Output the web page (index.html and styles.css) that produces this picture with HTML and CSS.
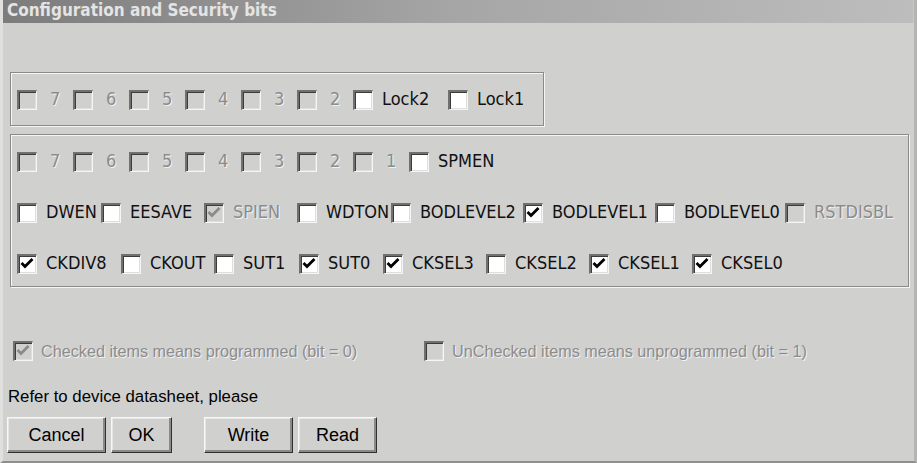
FILE: index.html
```html
<!DOCTYPE html>
<html lang="en">
<head>
  <meta charset="UTF-8">
  <title>Configuration and Security bits</title>
  <link rel="stylesheet" href="styles.css">
</head>
<body>
  <div class="window">
    <div class="titlebar">Configuration and Security bits</div>

    <div class="content">
      <!-- lock bits -->
      <div class="group lock">
        <div class="row">
          <div class="item w56 dis"><span class="cb"></span><span class="txt num">7</span></div>
          <div class="item w56 dis"><span class="cb"></span><span class="txt num">6</span></div>
          <div class="item w56 dis"><span class="cb"></span><span class="txt num">5</span></div>
          <div class="item w56 dis"><span class="cb"></span><span class="txt num">4</span></div>
          <div class="item w56 dis"><span class="cb"></span><span class="txt num">3</span></div>
          <div class="item w56 dis"><span class="cb"></span><span class="txt num">2</span></div>
          <div class="item w95"><span class="cb"></span><span class="txt">Lock2</span></div>
          <div class="item"><span class="cb"></span><span class="txt">Lock1</span></div>
        </div>
      </div>

      <!-- fuse bits -->
      <div class="group fuses">
        <div class="row">
          <div class="item w56 dis"><span class="cb"></span><span class="txt num">7</span></div>
          <div class="item w56 dis"><span class="cb"></span><span class="txt num">6</span></div>
          <div class="item w56 dis"><span class="cb"></span><span class="txt num">5</span></div>
          <div class="item w56 dis"><span class="cb"></span><span class="txt num">4</span></div>
          <div class="item w56 dis"><span class="cb"></span><span class="txt num">3</span></div>
          <div class="item w56 dis"><span class="cb"></span><span class="txt num">2</span></div>
          <div class="item w56 dis"><span class="cb"></span><span class="txt num">1</span></div>
          <div class="item"><span class="cb"></span><span class="txt">SPMEN</span></div>
        </div>
        <div class="row">
          <div class="item w84"><span class="cb"></span><span class="txt">DWEN</span></div>
          <div class="item w103"><span class="cb"></span><span class="txt">EESAVE</span></div>
          <div class="item w93 dis"><span class="cb on"><svg viewBox="0 0 17 17"><polyline points="2.5,7 6,10.5 13.5,3"/></svg></span><span class="txt">SPIEN</span></div>
          <div class="item w94"><span class="cb"></span><span class="txt">WDTON</span></div>
          <div class="item w132"><span class="cb"></span><span class="txt">BODLEVEL2</span></div>
          <div class="item w132"><span class="cb on"><svg viewBox="0 0 17 17"><polyline points="2.5,7 6,10.5 13.5,3"/></svg></span><span class="txt">BODLEVEL1</span></div>
          <div class="item w130"><span class="cb"></span><span class="txt">BODLEVEL0</span></div>
          <div class="item dis"><span class="cb"></span><span class="txt">RSTDISBL</span></div>
        </div>
        <div class="row">
          <div class="item w104"><span class="cb on"><svg viewBox="0 0 17 17"><polyline points="2.5,7 6,10.5 13.5,3"/></svg></span><span class="txt">CKDIV8</span></div>
          <div class="item w93"><span class="cb"></span><span class="txt">CKOUT</span></div>
          <div class="item w85"><span class="cb"></span><span class="txt">SUT1</span></div>
          <div class="item w84"><span class="cb on"><svg viewBox="0 0 17 17"><polyline points="2.5,7 6,10.5 13.5,3"/></svg></span><span class="txt">SUT0</span></div>
          <div class="item w103"><span class="cb on"><svg viewBox="0 0 17 17"><polyline points="2.5,7 6,10.5 13.5,3"/></svg></span><span class="txt">CKSEL3</span></div>
          <div class="item w103"><span class="cb"></span><span class="txt">CKSEL2</span></div>
          <div class="item w103"><span class="cb on"><svg viewBox="0 0 17 17"><polyline points="2.5,7 6,10.5 13.5,3"/></svg></span><span class="txt">CKSEL1</span></div>
          <div class="item"><span class="cb on"><svg viewBox="0 0 17 17"><polyline points="2.5,7 6,10.5 13.5,3"/></svg></span><span class="txt">CKSEL0</span></div>
        </div>
      </div>

      <div class="legend">
        <div class="legend-item first dis"><span class="cb on"><svg viewBox="0 0 17 17"><polyline points="2.5,7 6,10.5 13.5,3"/></svg></span><span class="ltxt">Checked items means programmed (bit = 0)</span></div>
        <div class="legend-item dis"><span class="cb"></span><span class="ltxt">UnChecked items means unprogrammed (bit = 1)</span></div>
      </div>

      <p class="note">Refer to device datasheet, please</p>

      <div class="buttons">
        <button class="btn cancel">Cancel</button>
        <button class="btn ok">OK</button>
        <button class="btn write">Write</button>
        <button class="btn read">Read</button>
      </div>
    </div>
  </div>
</body>
</html>
```

FILE: styles.css
```css
body {
  margin: 0;
  background: #d0d0cf;
  font-family: "DejaVu Sans Condensed", "DejaVu Sans", sans-serif;
  font-stretch: condensed;
}
.window {
  width: 917px;
  height: 463px;
  box-sizing: border-box;
  background: #d0d0cf;
  border-left: 3px solid #e0e0df;
  border-right: 3px solid #b4b4b3;
  border-bottom: 2px solid #8e8e8e;
  overflow: hidden;
}
.titlebar {
  height: 23px;
  padding-left: 4px;
  background: linear-gradient(to right, #7c7c7c, #a6a6a6 50%, #bdbdbd);
  color: #e4e4e4;
  font-family: "DejaVu Sans Condensed", "DejaVu Sans", sans-serif;
  font-weight: bold;
  font-size: 17px;
  line-height: 21px;
  border-right: 1px solid #c8c8c8;
}
.content {
  padding: 49px 0 0 7px;
}

/* etched group box */
.group {
  box-sizing: border-box;
  border: 1px solid #8a8a8a;
  box-shadow: 1px 1px 0 #f6f6f6, inset 1px 1px 0 #f6f6f6;
  padding-left: 6px;
}
.lock {
  width: 534px;
  height: 54px;
  padding-top: 17px;
}
.fuses {
  width: 899px;
  height: 153px;
  margin-top: 8px;
  padding-top: 17px;
  display: flex;
  flex-direction: column;
  gap: 31px;
}
.row {
  display: flex;
  height: 20px;
}
.item {
  display: flex;
  align-items: center;
  flex: none;
  white-space: nowrap;
  font-size: 18px;
  color: #111;
}
.w56 { width: 56px; }
.w84 { width: 84px; }
.w85 { width: 85px; }
.w93 { width: 93px; }
.w94 { width: 94px; }
.w95 { width: 95px; }
.w103 { width: 103px; }
.w104 { width: 104px; }
.w130 { width: 130px; }
.w132 { width: 132px; }
.txt {
  margin-left: 9px;
  padding-bottom: 2px;
  line-height: 18px;
}
.txt.num {
  margin-left: 13px;
}
.dis .txt,
.dis .ltxt {
  color: #8c8c8c;
  text-shadow: 1px 1px 0 #f2f2f2;
}

/* classic sunken checkbox */
.cb {
  flex: none;
  width: 20px;
  height: 20px;
  box-sizing: border-box;
  border-style: solid;
  border-width: 2px 1px 1px 2px;
  border-color: #707070 #f6f6f6 #f6f6f6 #707070;
  box-shadow: inset 1px 1px 0 #3c3c3c, inset -1px -1px 0 #dedede;
  background: #fff;
}
.dis .cb {
  background: #d0d0cf;
}
.cb svg {
  display: block;
  width: 17px;
  height: 17px;
}
.cb polyline {
  fill: none;
  stroke: #000;
  stroke-width: 2.8;
}
.dis .cb polyline {
  stroke: #8a8a8a;
}

.legend {
  display: flex;
  margin: 54px 0 0 3px;
  height: 20px;
}
.legend-item {
  display: flex;
  align-items: center;
  white-space: nowrap;
}
.legend-item.first {
  width: 411px;
}
.ltxt {
  margin-left: 8px;
  font-family: "Liberation Sans", Arial, sans-serif;
  font-size: 16.2px;
}

.note {
  margin: 26px 0 0 -2px;
  font-family: "Liberation Sans", Arial, sans-serif;
  font-size: 16.8px;
  line-height: 20px;
  color: #000;
}

.buttons {
  display: flex;
  margin: 10px 0 0 -3px;
}
.btn {
  height: 36px;
  box-sizing: border-box;
  margin: 0 5px 0 0;
  padding: 0;
  background: #d0d0cf;
  font-family: "Liberation Sans", Arial, sans-serif;
  font-size: 18px;
  color: #000;
  border: 1px solid;
  border-color: #f8f8f8 #303030 #303030 #f8f8f8;
  box-shadow: inset -2px -2px 0 #8a8a8a, inset 1px 1px 0 #e6e6e6;
  border-radius: 0;
}
.cancel { width: 99px; }
.ok { width: 61px; margin-right: 32px; }
.write { width: 89px; }
.read { width: 79px; }
```
